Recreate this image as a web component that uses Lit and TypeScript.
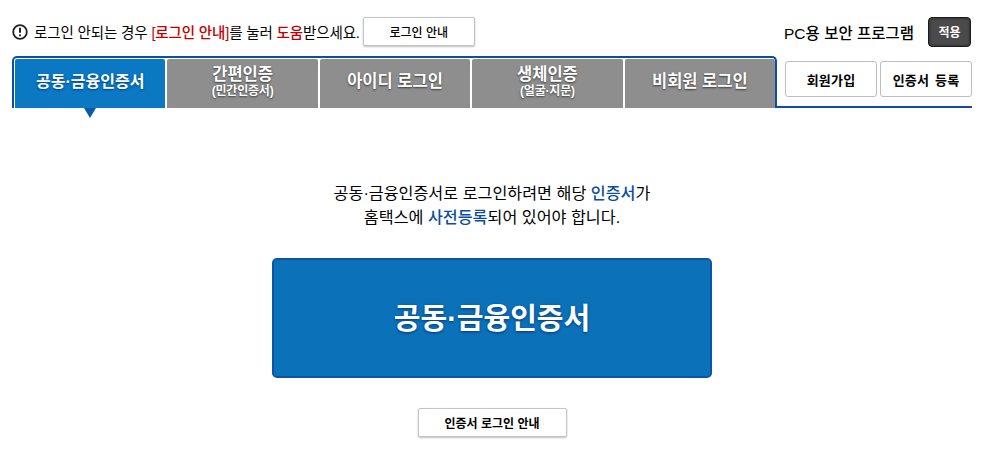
import { LitElement, html, css } from 'lit';
import { customElement } from 'lit/decorators.js';

const FONT = css`"Liberation Sans", "Noto Sans CJK KR", sans-serif`;

const TABS = [
  { label: '공동·금융인증서', active: true },
  { label: '간편인증', sub: '(민간인증서)' },
  { label: '아이디 로그인' },
  { label: '생체인증', sub: '(얼굴·지문)' },
  { label: '비회원 로그인' },
];

@customElement('app-root')
export class AppRoot extends LitElement {
  static styles = css`
    :host {
      display: block;
      width: 984px;
      height: 460px;
      background: #fff;
      color: #000;
      font-family: ${FONT};
      overflow: hidden;
    }
    .top {
      display: flex;
      align-items: center;
      height: 29px;
      padding: 17px 13px 0 12px;
    }
    .notice {
      display: flex;
      align-items: center;
      font-size: 14.5px;
      letter-spacing: -0.13px;
      white-space: nowrap;
    }
    .notice svg {
      margin-right: 6px;
    }
    .red {
      color: #c00000;
      font-weight: 500;
    }
    .btn {
      box-sizing: border-box;
      display: flex;
      align-items: center;
      justify-content: center;
      background: #fff;
      border: 1px solid #c4c4c4;
      border-radius: 2px;
      box-shadow: 0 1px 2px rgba(0, 0, 0, 0.25);
      font-size: 12px;
      font-weight: 500;
      color: #000;
      white-space: nowrap;
    }
    .guide {
      width: 112px;
      height: 29px;
      margin-left: 3px;
    }
    .pc {
      margin-left: auto;
      font-size: 15.5px;
      font-weight: 500;
      white-space: nowrap;
    }
    .apply {
      box-sizing: border-box;
      display: flex;
      align-items: center;
      justify-content: center;
      width: 43px;
      height: 30px;
      margin-left: 14px;
      background: #4a4a4a;
      border: 1px solid #1c1c1c;
      border-radius: 4px;
      box-shadow: inset 0 0 3px rgba(0, 0, 0, 0.6);
      color: #fff;
      font-size: 12px;
      font-weight: 700;
    }
    .nav {
      display: flex;
      margin: 10px 12px 0 12px;
      height: 52px;
      border-bottom: 2px solid #0b4ea2;
      box-sizing: border-box;
    }
    .tabs {
      box-sizing: border-box;
      position: relative;
      display: flex;
      gap: 2px;
      width: 765px;
      height: 52px;
      padding: 1px 0 0 1px;
      border: 2px solid #0b4ea2;
      border-bottom: 0;
      border-radius: 5px 5px 0 0;
      background: #fff;
    }
    .tab {
      flex: 1 1 0;
      min-width: 0;
      display: flex;
      flex-direction: column;
      align-items: center;
      justify-content: center;
      padding-bottom: 4px;
      background: #8e8e8e;
      border-radius: 2px 2px 0 0;
      color: #fff;
      font-size: 16.5px;
      font-weight: 700;
      line-height: 19px;
      text-shadow: 0 1px 2px rgba(0, 0, 0, 0.6);
      white-space: nowrap;
    }
    .tab small {
      font-size: 12px;
      line-height: 15px;
      font-weight: 700;
      letter-spacing: -0.2px;
    }
    .tab.active {
      position: relative;
      background: #0a78c2;
      font-size: 16px;
      text-shadow: 0 1px 2px rgba(0, 40, 100, 0.7);
    }
    .tab.active::after {
      content: '';
      position: absolute;
      left: 68.5px;
      top: 100%;
      border-style: solid;
      border-width: 10px 6.5px 0 6.5px;
      border-color: #0b5aa5 transparent transparent transparent;
    }
    .side {
      display: flex;
      gap: 3px;
      padding: 5px 0 0 8px;
    }
    .side .btn {
      width: 92px;
      height: 36px;
      border-radius: 3px;
      border-color: #bdbdbd;
      box-shadow: none;
      font-size: 13px;
      font-weight: 700;
      letter-spacing: 0.2px;
      word-spacing: 2px;
    }
    .main {
      display: flex;
      flex-direction: column;
      align-items: center;
      padding-top: 73px;
    }
    .intro {
      margin: 0;
      font-size: 16.2px;
      line-height: 24px;
      text-align: center;
    }
    .blue {
      color: #0b4ea2;
      font-weight: 500;
    }
    .cert {
      box-sizing: border-box;
      display: flex;
      align-items: center;
      justify-content: center;
      width: 440px;
      height: 120px;
      margin-top: 29px;
      padding-bottom: 4px;
      background: #0b72ba;
      border: 2px solid #0a55a8;
      border-radius: 5px;
      color: #fff;
      font-size: 29px;
      font-weight: 700;
      text-shadow: 0 1px 3px rgba(0, 30, 90, 0.7);
    }
    .howto {
      width: 149px;
      height: 29px;
      margin-top: 30px;
      font-weight: 700;
    }
  `;

  render() {
    return html`
      <div class="top">
        <div class="notice">
          <svg width="16" height="16" viewBox="0 0 16 16">
            <circle cx="8" cy="8" r="6.8" fill="none" stroke="#222" stroke-width="1.8" />
            <path d="M8 3.8v5" stroke="#222" stroke-width="2" />
            <circle cx="8" cy="11.3" r="1.1" fill="#222" />
          </svg>
          <span>로그인 안되는 경우 <span class="red">[로그인 안내]</span>를 눌러 <span class="red">도움</span>받으세요.</span>
        </div>
        <div class="btn guide">로그인 안내</div>
        <div class="pc">PC용 보안 프로그램</div>
        <div class="apply">적용</div>
      </div>
      <div class="nav">
        <div class="tabs">
          ${TABS.map(
            (t) => html`<div class="tab ${t.active ? 'active' : ''}">
              <span>${t.label}</span>
              ${t.sub ? html`<small>${t.sub}</small>` : ''}
            </div>`
          )}
        </div>
        <div class="side">
          <div class="btn">회원가입</div>
          <div class="btn">인증서 등록</div>
        </div>
      </div>
      <div class="main">
        <p class="intro">
          공동·금융인증서로 로그인하려면 해당 <span class="blue">인증서</span>가<br />
          홈택스에 <span class="blue">사전등록</span>되어 있어야 합니다.
        </p>
        <div class="cert">공동·금융인증서</div>
        <div class="btn howto">인증서 로그인 안내</div>
      </div>
    `;
  }
}
